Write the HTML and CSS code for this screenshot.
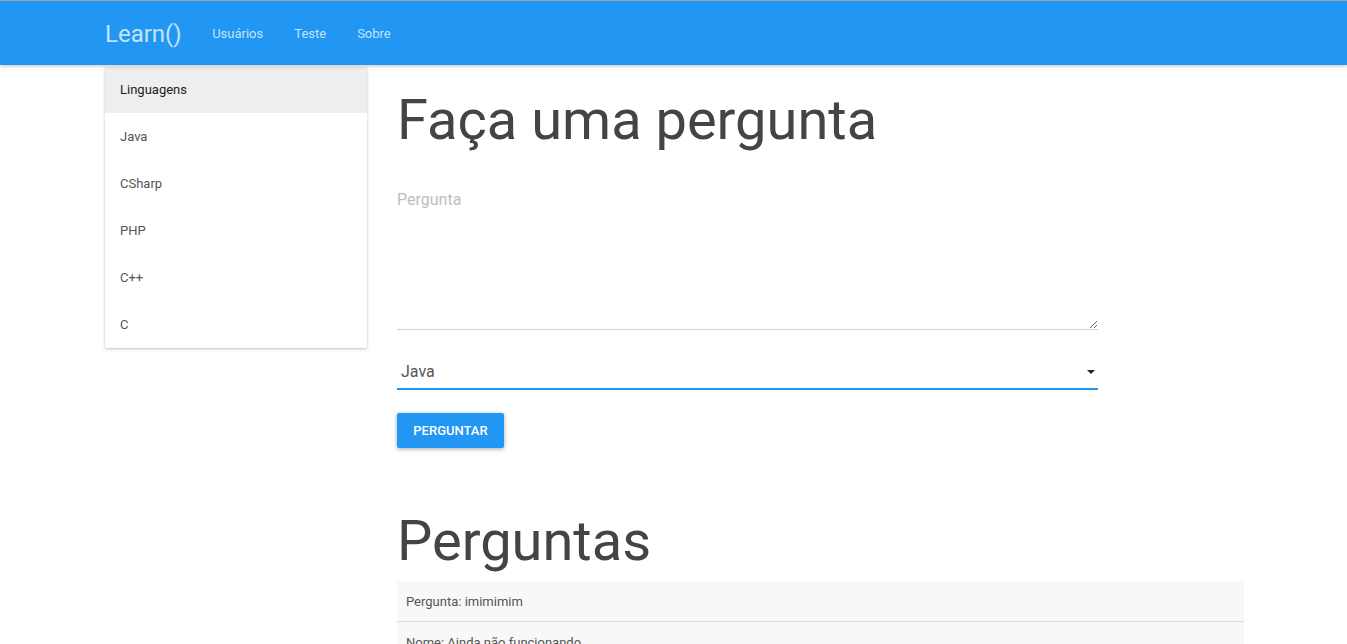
FILE: index.html
```html
<!DOCTYPE html>
<html lang="pt">
<head>
<meta charset="utf-8">
<title>Learn()</title>
<link rel="stylesheet" href="styles.css">
</head>
<body>
<nav class="navbar">
  <div class="container nav-inner">
    <a class="brand">Learn()</a>
    <ul class="nav-links">
      <li><a>Usuários</a></li>
      <li><a>Teste</a></li>
      <li><a>Sobre</a></li>
    </ul>
  </div>
</nav>
<div class="container row">
  <aside class="sidebar">
    <div class="list-group">
      <div class="list-head">Linguagens</div>
      <div class="list-item">Java</div>
      <div class="list-item">CSharp</div>
      <div class="list-item">PHP</div>
      <div class="list-item">C++</div>
      <div class="list-item">C</div>
    </div>
  </aside>
  <main class="main">
    <h1 class="title">Faça uma pergunta</h1>
    <form class="ask-form">
      <textarea class="question" placeholder="Pergunta"></textarea>
      <div class="select-wrap">
        <span class="select-value">Java</span>
        <svg class="caret" width="8" height="4" viewBox="0 0 8 4"><path d="M0 0h8L4 4z" fill="#222"/></svg>
      </div>
      <button type="button" class="btn">PERGUNTAR</button>
    </form>
    <h1 class="title title-list">Perguntas</h1>
    <div class="qlist">
      <div class="qrow">Pergunta: imimimim</div>
      <div class="qrow">Nome: Ainda não funcionando</div>
    </div>
  </main>
</div>
</body>
</html>
```
FILE: styles.css
```css
* { box-sizing: border-box; }
html, body { margin: 0; padding: 0; }
body {
  font-family: Roboto, "Noto Sans", Arial, sans-serif;
  font-size: 13px;
  color: rgba(0,0,0,0.87);
  background: #fff;
  overflow: hidden;
}
.container {
  width: 1167px;
  margin: 0 auto;
  padding: 0 15px;
}
.navbar {
  background: #2196f3;
  border-top: 1px solid #9aa3ab;
  height: 65px;
  box-shadow: 0 1px 4px rgba(0,0,0,0.25);
  position: relative;
  z-index: 2;
}
.nav-inner {
  display: flex;
  align-items: center;
  height: 64px;
  padding-left: 15px;
  padding-top: 1px;
}
.brand {
  font-size: 24px;
  color: #c4e4fd;
  margin-right: 15px;
  line-height: 64px;
}
.nav-links {
  display: flex;
  list-style: none;
  margin: 0;
  padding: 0;
}
.nav-links a {
  display: block;
  padding: 0 15.5px;
  font-size: 13px;
  line-height: 64px;
  color: #c4e4fd;
}
.row {
  display: flex;
  padding: 0;
}
.sidebar {
  flex: 0 0 292px;
  padding: 0 15px;
  padding-top: 2px;
}
.list-group {
  background: #fff;
  border-radius: 2px;
  box-shadow: 0 1px 3px rgba(0,0,0,0.25);
  overflow: hidden;
}
.list-head {
  background: #eeeeee;
  height: 46px;
  line-height: 46px;
  padding-left: 15px;
  color: #212121;
}
.list-item {
  height: 47px;
  line-height: 47px;
  padding-left: 15px;
  color: #555;
}
.main {
  flex: 0 0 877px;
  padding: 0 15px;
}
.title {
  font-size: 56px;
  font-weight: 400;
  color: #444;
  margin: 21px 0 0;
  line-height: 68px;
}
.ask-form {
  width: 701px;
  margin-top: 36px;
}
.question {
  display: block;
  width: 100%;
  height: 140px;
  border: none;
  border-bottom: 1px solid #d2d2d2;
  font-family: inherit;
  font-size: 16px;
  padding: 0;
  resize: vertical;
  outline: none;
  color: #bdbdbd;
}
.question::placeholder { color: #bdbdbd; }
.select-wrap {
  margin-top: 29px;
  height: 31px;
  border-bottom: 2px solid #2196f3;
  display: flex;
  align-items: center;
  justify-content: space-between;
  padding: 0 3px 4px 4px;
}
.select-value {
  font-size: 16px;
  color: #555;
}
.btn {
  margin-top: 23px;
  background: #2196f3;
  color: #fff;
  border: none;
  border-radius: 2px;
  height: 35px;
  width: 107px;
  font-family: inherit;
  font-size: 13px;
  font-weight: 500;
  letter-spacing: 0;
  box-shadow: 0 1px 4px rgba(0,0,0,0.35);
  padding: 0;
}
.title-list {
  margin-top: 59px;
}
.qlist {
  margin-top: 6px;
  background: #f8f8f8;
}
.qrow {
  height: 41px;
  line-height: 41px;
  padding-left: 9px;
  color: #555;
  border-bottom: 1px solid #dcdcdc;
}
```
